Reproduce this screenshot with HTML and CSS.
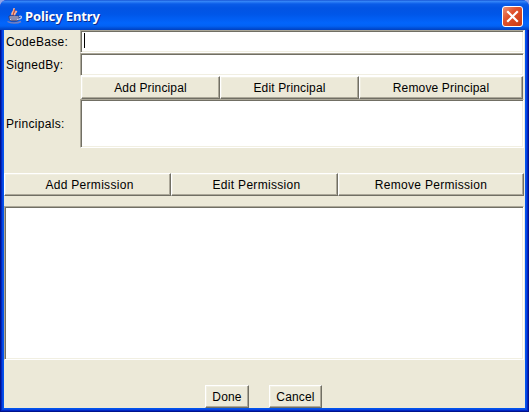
FILE: index.html
```html
<!DOCTYPE html>
<html lang="en">
<head>
<meta charset="utf-8">
<title>Policy Entry</title>
<link rel="stylesheet" href="styles.css">
</head>
<body>
<div class="window">
  <header class="titlebar">
    <svg class="logo" width="16" height="16" viewBox="0 0 16 16" fill="none">
      <path d="M5.500 7C3.500 5 8 3.800 6.800.2M7.800 7.500C6.500 5.500 9 5 9.500 2.800" stroke="#f8b49a" stroke-width="1.800"/>
      <path d="M6.500 7.500C5 5.500 8.300 4.200 7.300 1.500" stroke="#d94b28" stroke-width="1.100"/>
      <path d="M2 8h10c0 3.200-1 5-2.500 5h-5c-1.500 0-2.500-1.800-2.500-5z" fill="#dfe2f4" stroke="#34386e"/>
      <path d="M12 8.500c3.500-1.300 3.500 2-.8 2.800" stroke="#c3c6e2" stroke-width="1.200"/>
      <path d="M3 10h8M4 12h6" stroke="#34386e"/>
      <path d="M.5 13.500c3 2 10 2 13.500 0" stroke="#777fbd" stroke-width="1.500"/>
    </svg>
    <h1 class="title">Policy Entry</h1>
    <button class="close" aria-label="Close">
      <svg width="19" height="19" viewBox="0 0 19 19"><path d="M5 5l9 9M14 5l-9 9" stroke="#fff" stroke-width="2.200" stroke-linecap="square"/></svg>
    </button>
  </header>
  <main class="content">
    <div class="form">
      <label class="label">CodeBase:</label>
      <div class="sunken field"><span class="caret"></span></div>
      <label class="label">SignedBy:</label>
      <div class="sunken field"></div>
      <div class="principal-actions">
        <button class="btn">Add Principal</button>
        <button class="btn">Edit Principal</button>
        <button class="btn">Remove Principal</button>
      </div>
      <label class="label">Principals:</label>
      <div class="sunken"></div>
    </div>
    <div class="permission-actions">
      <button class="btn shifted">Add Permission</button>
      <button class="btn shifted">Edit Permission</button>
      <button class="btn">Remove Permission</button>
    </div>
    <div class="sunken permissions"></div>
    <footer class="footer">
      <button class="btn done">Done</button>
      <button class="btn cancel">Cancel</button>
    </footer>
  </main>
</div>
</body>
</html>
```

FILE: styles.css
```css
* { box-sizing: border-box; }
body { margin: 0; background: #8fa3e8; overflow: hidden; }
.window {
  width: 529px;
  height: 412px;
  display: flex;
  flex-direction: column;
  border-radius: 7px 7px 0 0;
  overflow: hidden;
  background: #0831d9;
  font: 12px "Liberation Sans", Arial, sans-serif;
  color: #000;
}
.titlebar {
  position: relative;
  z-index: 1;
  height: 30px;
  flex: none;
  display: flex;
  align-items: center;
  padding: 2px 6px 0 7px;
  background: linear-gradient(#0a3fc8 0, #3a8cf8 1px, #2b7bf5 2px, #0a5ce8 4px, #0254e3 8px, #0056e8 14px, #0265fc 23px, #0262f5 26px, #0048cc 29px, #0040c0 30px);
}
.logo { flex: none; }
.title {
  margin: 0 auto 0 2px;
  font: bold 13px/16px "Noto Sans", "Open Sans", sans-serif;
  color: #fff;
  letter-spacing: -0.1px;
  text-shadow: 1px 1px #0a2a90;
}
.close {
  width: 21px;
  height: 21px;
  padding: 0;
  border: 1px solid #fff;
  border-radius: 3px;
  background: linear-gradient(135deg, #ee9275, #e0512c 40%, #c93a12);
}
.close svg { display: block; }
.content {
  flex: 1;
  display: flex;
  flex-direction: column;
  margin: 0 4px 4px;
  background: #ece9d8;
  box-shadow: 0 0 0 1px #0054ee, 0 0 0 2px #0846e0, 0 0 0 3px #0026c4, 0 0 0 4px #00138c;
}
.form {
  display: grid;
  grid-template-columns: 76px 444px;
  grid-template-rows: 23px 23px 23px 49px;
}
.label {
  align-self: center;
  padding-left: 2px;
  letter-spacing: 0.3px;
}
.sunken {
  background: #fff;
  border: 1px solid;
  border-color: #aca899 #fff #fff #aca899;
  box-shadow: inset 1px 1px #716f64, inset -1px -1px #f1efe2;
}
.field { padding: 2px 3px; }
.caret { display: block; width: 1px; height: 15px; background: #000; }
.principal-actions {
  grid-column: 2;
  display: grid;
  grid-template-columns: 139px 139px 164px;
  padding-left: 1px;
}
.btn {
  padding: 0;
  border: 1px solid;
  border-color: #fff #716f64 #716f64 #fff;
  border-radius: 0;
  background: #ece9d8;
  box-shadow: inset -1px -1px #aca899, inset 1px 1px #f1efe2;
  font: inherit;
  color: inherit;
  letter-spacing: 0.15px;
}
.permission-actions .btn { letter-spacing: 0.3px; }
.permission-actions .shifted { padding-left: 4px; }
.permission-actions {
  display: grid;
  grid-template-columns: 167px 167px 186px;
  height: 23px;
  margin-top: 25px;
}
.permissions { width: 520px; height: 154px; margin-top: 10px; }
.footer {
  display: flex;
  gap: 20px;
  height: 23px;
  margin: 25px 0 0 201px;
}
.done { width: 44px; }
.cancel { width: 53px; }
```
